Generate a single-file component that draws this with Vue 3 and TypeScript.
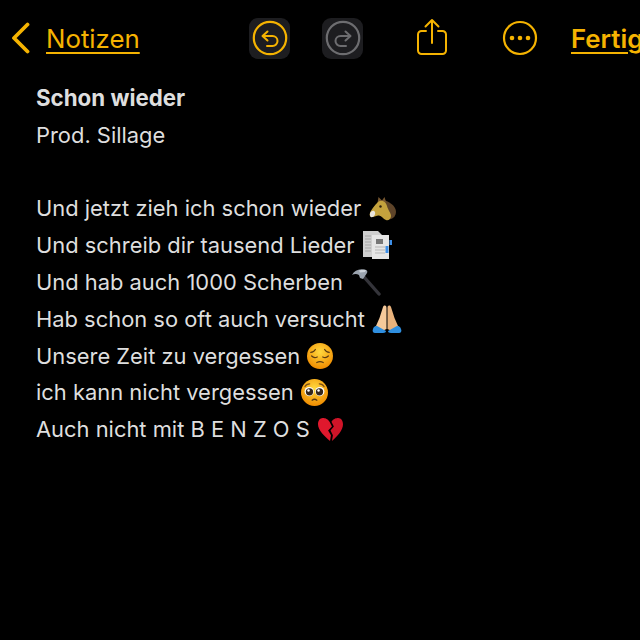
<script setup lang="ts">
const lines = [
  { text: 'Und jetzt zieh ich schon wieder', icon: 'horse' },
  { text: 'Und schreib dir tausend Lieder', icon: 'doc' },
  { text: 'Und hab auch 1000 Scherben', icon: 'hammer' },
  { text: 'Hab schon so oft auch versucht', icon: 'pray' },
  { text: 'Unsere Zeit zu vergessen', icon: 'pensive' },
  { text: 'ich kann nicht vergessen', icon: 'plead' },
  { text: 'Auch nicht mit B E N Z O S', icon: 'heart' },
]
</script>

<template>
  <div class="screen">
    <header class="toolbar">
      <svg class="chevron" width="20" height="32" viewBox="0 0 20 32" fill="none">
        <path d="M16.500 2.500 3 16l13.500 13.500" stroke="#f5b301" stroke-width="3.800" stroke-linecap="round" stroke-linejoin="round" />
      </svg>
      <a class="link back">Notizen</a>

      <div class="history undo">
        <svg width="36" height="36" viewBox="0 0 36 36" fill="none" stroke="#f5b301">
          <circle cx="18" cy="18" r="16.200" stroke-width="2.200" />
          <path d="M15.500 11.500 10.500 16l5 4.500M11 16h9.500a5 5 0 0 1 0 10H15" stroke-width="2" stroke-linecap="round" stroke-linejoin="round" />
        </svg>
      </div>
      <div class="history redo">
        <svg width="36" height="36" viewBox="0 0 36 36" fill="none" stroke="#6d6d70">
          <circle cx="18" cy="18" r="16.200" stroke-width="2.200" />
          <path d="M20.500 11.500 25.500 16l-5 4.500M25 16h-9.500a5 5 0 0 0 0 10H21" stroke-width="2" stroke-linecap="round" stroke-linejoin="round" />
        </svg>
      </div>

      <svg class="share" width="32" height="38" viewBox="0 0 32 38" fill="none" stroke="#f5b301" stroke-width="2" stroke-linecap="round" stroke-linejoin="round">
        <path d="M10 13H5.500A3.500 3.500 0 0 0 2 16.500V32.500A3.500 3.500 0 0 0 5.500 36h21a3.500 3.500 0 0 0 3.500-3.500V16.500A3.500 3.500 0 0 0 26.500 13H22" />
        <path d="M16 25V2M9.500 8.500 16 2l6.500 6.500" />
      </svg>

      <svg class="more" width="36" height="36" viewBox="0 0 36 36" fill="none">
        <circle cx="18" cy="18" r="16" stroke="#f5b301" stroke-width="2.200" />
        <circle cx="10" cy="18" r="2.300" fill="#f5b301" />
        <circle cx="18" cy="18" r="2.300" fill="#f5b301" />
        <circle cx="26" cy="18" r="2.300" fill="#f5b301" />
      </svg>

      <a class="link done">Fertig</a>
    </header>

    <main class="note">
      <p class="title">Schon wieder</p>
      <p>Prod. Sillage</p>
      <p class="blank"></p>
      <p v-for="line in lines" :key="line.text" class="line">
        <span>{{ line.text }}</span>

        <svg v-if="line.icon === 'horse'" class="emoji horse" width="28" height="26" viewBox="0 0 28 26">
          <path d="M14 4c6 1 13 6 13 12 0 3-2 6-5 7l-4 1z" fill="#5e4429" />
          <path d="M8.500 7 9.500 1l3.500 3.500L15.500 1 17 6l-4 3z" fill="#76562f" />
          <path d="M9 6c4-3 8 0 9 4 1 4 4 7 4 10 0 3-3 5-5 4-3-1-4-4-7-4.500-2-.5-4 1.500-7 1.500-2 0-3-2-2-4 1-3 5-8 8-11z" fill="#c4a23d" />
          <circle cx="11.500" cy="10.500" r="1.200" fill="#2e2110" />
          <path d="M1 17.500c.5-2 2.500-3 4-2.500s1.500 3 .5 4.500-2.500 2-3.500 1.500-1.200-2-1-3.500z" fill="#e8e4dc" />
        </svg>

        <svg v-else-if="line.icon === 'doc'" class="emoji doc" width="29" height="29" viewBox="0 0 29 29">
          <path d="M0 0h15l5 5v21H0z" fill="#cfcfcf" />
          <rect x="9" y="4" width="17" height="24" fill="#e6e6e6" />
          <rect x="13" y="8" width="7" height="5" fill="#777" />
          <path d="M2 5h6M2 8h6M2 11h6M2 14h6M2 17h6M2 20h6" stroke="#a5a5a5" stroke-width="1" />
          <path d="M12 16h10M12 19h10M12 22h10" stroke="#b5b5b5" stroke-width="1" />
          <rect x="22.500" y="15" width="3" height="7" fill="#3d8fe8" />
          <rect x="26.500" y="9" width="2.500" height="5" fill="#3d8fe8" />
        </svg>

        <svg v-else-if="line.icon === 'hammer'" class="emoji hammer" width="30" height="30" viewBox="0 0 30 30">
          <path d="M13 10 28 27" stroke="#34343a" stroke-width="3.400" stroke-linecap="round" />
          <path d="M1 8c2.500-5 8-7 14-5 1.500.5 1.500 2 1 3l-4 6-3-1-1-3C5.500 6.500 3 7 1 8z" fill="#9aa3ae" />
          <path d="M8 3.500c2.500-1 5-1 7-.5l-1 2-5 .5z" fill="#cdd3da" />
        </svg>

        <svg v-else-if="line.icon === 'pray'" class="emoji pray" width="30" height="28" viewBox="0 0 30 28">
          <path d="M14.500 24V3c0-3-2.500-3-3.500-1L7.500 13 4 21l-2 2 6 4z" fill="#f6c99a" />
          <path d="M15.500 24V3c0-3 2.500-3 3.500-1l3.500 11L26 21l2 2-6 4z" fill="#e9b27c" />
          <path d="M1 24c1-3 3-3.500 5-2.500l8 4.500c0 1-1 2-3 2H3c-2 0-3-2-2-4z" fill="#2f8fe0" />
          <path d="M29 24c-1-3-3-3.500-5-2.500L16 26c0 1 1 2 3 2h8c2 0 3-2 2-4z" fill="#2f8fe0" />
        </svg>

        <svg v-else-if="line.icon === 'pensive'" class="emoji face" width="26" height="26" viewBox="0 0 28 28">
          <defs>
            <radialGradient id="pensiveFace" cx="50%" cy="35%" r="65%">
              <stop offset="0" stop-color="#ffd93f" />
              <stop offset="1" stop-color="#f08c00" />
            </radialGradient>
          </defs>
          <circle cx="14" cy="14" r="14" fill="url(#pensiveFace)" />
          <g fill="none" stroke="#5a3a12" stroke-width="1.300" stroke-linecap="round">
            <path d="M4 10c2 0 4-1 5-3M24 10c-2 0-4-1-5-3" />
            <path d="M5 14c2 2 4 2 6 1M23 14c-2 2-4 2-6 1" />
            <path d="M10.500 21c2-1 5-1 7 0" />
          </g>
        </svg>

        <svg v-else-if="line.icon === 'plead'" class="emoji face" width="27" height="27" viewBox="0 0 28 28">
          <defs>
            <radialGradient id="pleadFace" cx="50%" cy="35%" r="65%">
              <stop offset="0" stop-color="#ffd93f" />
              <stop offset="1" stop-color="#f08c00" />
            </radialGradient>
          </defs>
          <circle cx="14" cy="14" r="14" fill="url(#pleadFace)" />
          <path d="M4 8c1-2 3-3 5-3M24 8c-1-2-3-3-5-3" fill="none" stroke="#7a4f16" stroke-width="1.200" stroke-linecap="round" />
          <circle cx="8.500" cy="13" r="4.800" fill="#fff" />
          <circle cx="19.500" cy="13" r="4.800" fill="#fff" />
          <circle cx="8.800" cy="13.300" r="3.800" fill="#33261c" />
          <circle cx="19.200" cy="13.300" r="3.800" fill="#33261c" />
          <circle cx="7.800" cy="11.800" r="1.300" fill="#fff" />
          <circle cx="18.200" cy="11.800" r="1.300" fill="#fff" />
          <path d="M11.500 22c1.500-1.200 3.500-1.200 5 0" fill="none" stroke="#5a3a12" stroke-width="1.300" stroke-linecap="round" />
        </svg>

        <svg v-else class="emoji heart" width="27" height="25" viewBox="0 0 28 26">
          <path d="M13 5C11 1.500 8 1 6 1 3 1 1 4 1 7.500 1 14 8 20 13.500 25l1-6-3-5 4-4z" fill="#e0182d" />
          <path d="M15 5c2-3.500 5-4 7-4 3 0 5 3 5 6.500C27 14 21 20 15.500 25l1-6-2.500-5 3.500-4z" fill="#d01428" />
        </svg>
      </p>
    </main>
  </div>
</template>

<style scoped>
.screen {
  width: 640px;
  height: 640px;
  overflow: hidden;
  background: #000;
  font-family: Inter, "Liberation Sans", sans-serif;
  color: #dedede;
}

.toolbar {
  display: flex;
  align-items: center;
  height: 76px;
  white-space: nowrap;
}

.chevron {
  margin-left: 11px;
  flex: none;
}

.link {
  color: #f5b301;
  font-size: 25.800px;
  text-decoration: underline;
  text-decoration-thickness: 2px;
  text-underline-offset: 4px;
}

.back {
  margin-left: 15px;
  width: 93px;
  flex: none;
}

.history {
  display: flex;
  align-items: center;
  justify-content: center;
  flex: none;
  width: 41px;
  height: 41px;
  border-radius: 9px;
  background: #1d1d20;
}

.undo {
  margin-left: 110px;
}

.redo {
  margin-left: 32px;
}

.share {
  flex: none;
  margin-left: 53px;
  margin-top: -3px;
}

.more {
  flex: none;
  margin-left: 54px;
}

.done {
  flex: none;
  margin-left: 33px;
  font-weight: 600;
}

.note {
  padding-top: 4px;
  padding-left: 36px;
  font-size: 21.900px;
  line-height: 36.800px;
}

.note p {
  margin: 0;
  height: 36.800px;
  white-space: nowrap;
}

.note .title {
  font-weight: 700;
  font-size: 22.300px;
}

.line {
  display: flex;
  align-items: center;
}

.emoji {
  flex: none;
}

.horse {
  margin-left: 8px;
}

.doc {
  margin-left: 8px;
  margin-top: -1px;
}

.hammer {
  margin-left: 8px;
}

.pray {
  margin-left: 7px;
  margin-top: -1px;
}

.face {
  margin-left: 7px;
}

.heart {
  margin-left: 7px;
}
</style>

<style>
html,
body {
  background: #000;
}
</style>
